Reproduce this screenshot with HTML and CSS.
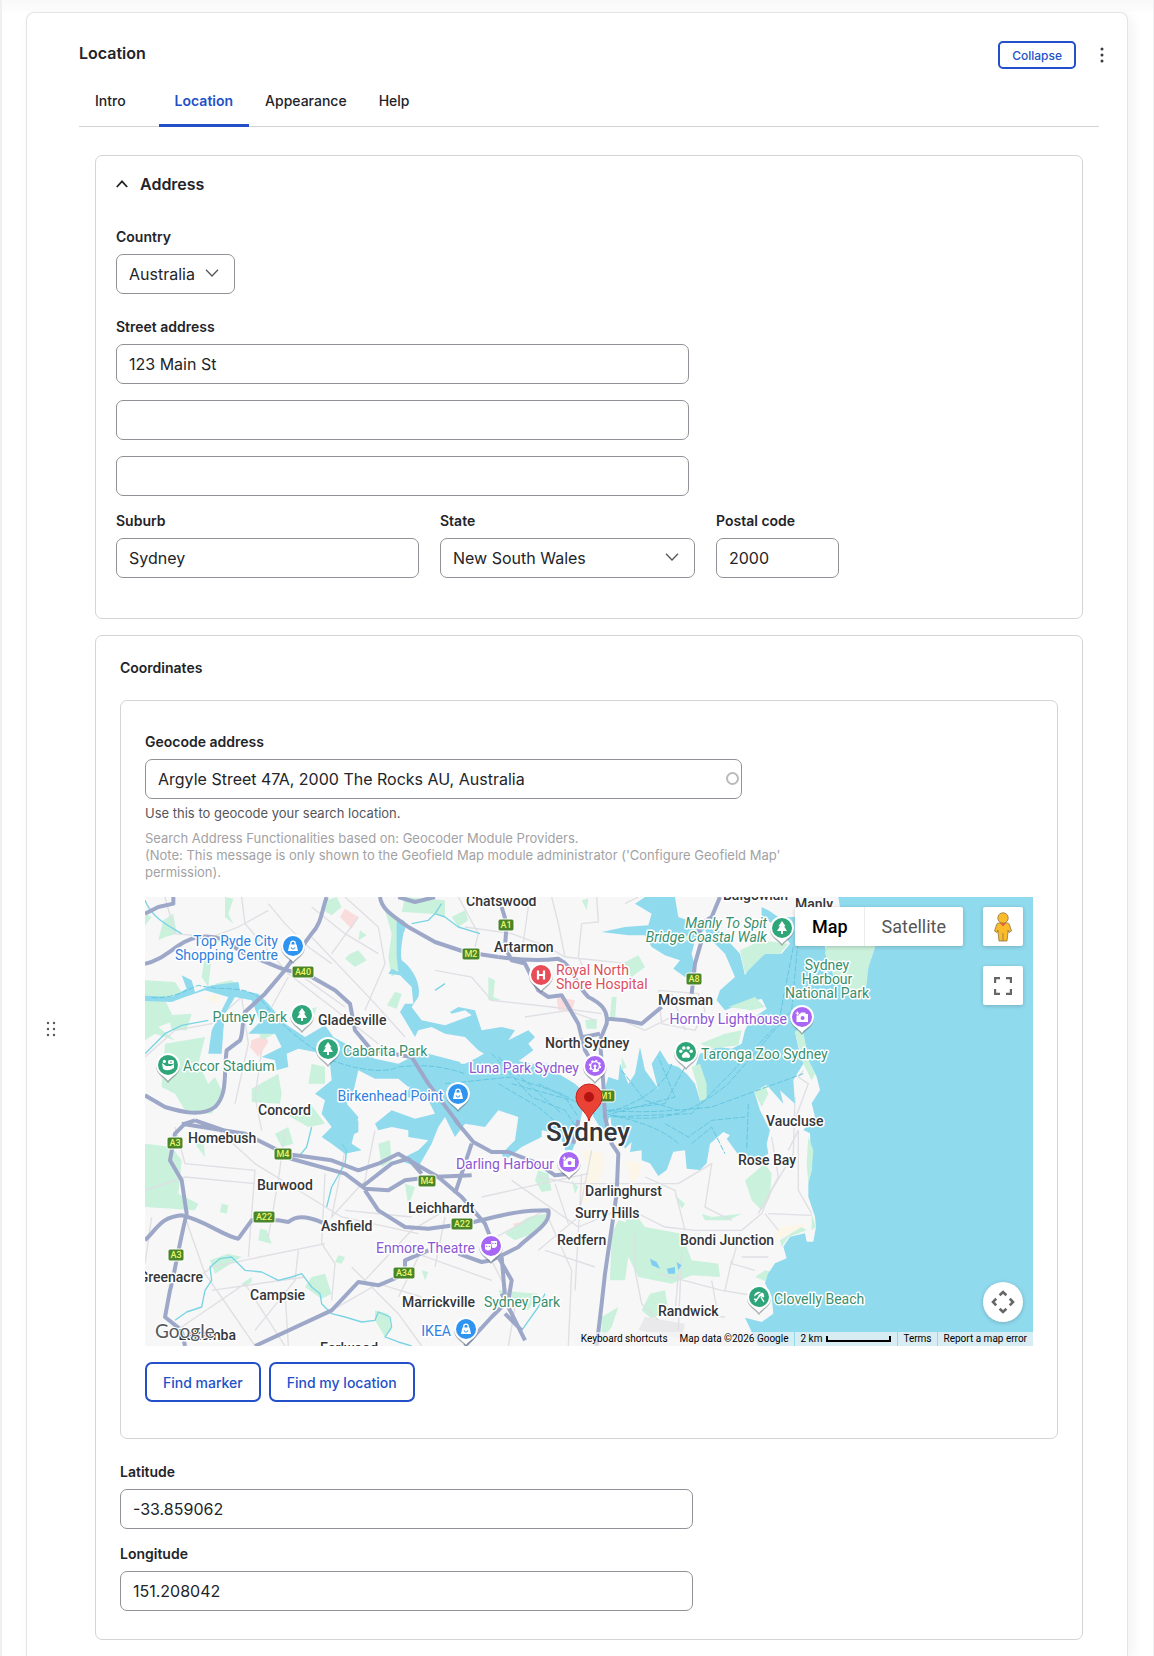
FILE: index.html
```html
<!DOCTYPE html>
<html lang="en">
<head>
<meta charset="utf-8">
<meta name="viewport" content="width=device-width, initial-scale=1">
<title>Location</title>
<link rel="stylesheet" href="styles.css">
</head>
<body>
<main class="page">
<article class="card">
  <div class="card-grip">
    <svg class="grip" viewBox="0 0 10 16" width="10" height="16" fill="#55565b" aria-hidden="true"><circle cx="2" cy="2" r="1.2"/><circle cx="8" cy="2" r="1.2"/><circle cx="2" cy="8" r="1.2"/><circle cx="8" cy="8" r="1.2"/><circle cx="2" cy="14" r="1.2"/><circle cx="8" cy="14" r="1.2"/></svg>
  </div>
  <div class="card-body">
    <header class="card-header">
      <h2 class="card-title">Location</h2>
      <div class="card-actions">
        <button type="button" class="btn btn-small">Collapse</button>
        <button type="button" class="kebab" aria-label="More actions"><svg viewBox="0 0 24 28" width="24" height="28" fill="#3a3b40" aria-hidden="true"><circle cx="12" cy="8" r="1.5"/><circle cx="12" cy="14" r="1.5"/><circle cx="12" cy="20" r="1.5"/></svg></button>
      </div>
    </header>
    <nav class="tabs">
      <a class="tab tab-first" href="#intro">Intro</a>
      <a class="tab tab-active" href="#location">Location</a>
      <a class="tab" href="#appearance">Appearance</a>
      <a class="tab" href="#help">Help</a>
    </nav>
    <div class="panel">
      <details class="box address" open>
        <summary class="summary"><svg viewBox="0 0 12 12" width="12" height="12" fill="none" stroke="#232429" stroke-width="1.8" aria-hidden="true"><path d="M.8 9 6 3.4 11.2 9"/></svg>Address</summary>
        <div class="address-fields">
          <div class="field">
            <label for="country">Country</label>
            <div class="select-wrap country"><select id="country"><option>Australia</option></select><svg class="caret" viewBox="0 0 14 8" width="14" height="8" aria-hidden="true"><path d="M1 .8 7 7 13 .8"/></svg></div>
          </div>
          <div class="field street">
            <label for="street1">Street address</label>
            <div class="stack">
              <input id="street1" type="text" value="123 Main St">
              <input type="text" aria-label="Street address line 2">
              <input type="text" aria-label="Street address line 3">
            </div>
          </div>
          <div class="field-row">
            <div class="field suburb"><label for="suburb">Suburb</label><input id="suburb" type="text" value="Sydney"></div>
            <div class="field state"><label for="state">State</label>
              <div class="select-wrap"><select id="state"><option>New South Wales</option></select><svg class="caret" viewBox="0 0 14 8" width="14" height="8" aria-hidden="true"><path d="M1 .8 7 7 13 .8"/></svg></div></div>
            <div class="field postal"><label for="postal">Postal code</label><input id="postal" type="text" value="2000"></div>
          </div>
        </div>
      </details>

      <section class="box coordinates">
        <h3 class="box-label">Coordinates</h3>
        <div class="box geocoder">
          <div class="field geocode">
            <label for="geocode">Geocode address</label>
            <div class="search-wrap"><input id="geocode" type="text" value="Argyle Street 47A, 2000 The Rocks AU, Australia"><span class="throbber"></span></div>
          </div>
          <p class="hint">Use this to geocode your search location.</p>
          <p class="hint note">Search Address Functionalities based on: Geocoder Module Providers.<br>(Note: This message is only shown to the Geofield Map module administrator ('Configure Geofield Map' permission).</p>

          <div class="map">
            <svg class="map-canvas" viewBox="0 0 888 449" preserveAspectRatio="xMidYMid slice" role="img" aria-label="Map of Sydney">
              <defs>
                <g id="pin"><path d="M0 17C-3 12-12 9-12 0A12 12 0 0 1 12 0C12 9 3 12 0 17Z" fill="#5b6770" opacity=".5" transform="translate(0 1)"/><path d="M0 16C-3 11-12 9-12 0A12 12 0 0 1 12 0C12 9 3 11 0 16Z" fill="#fff"/><circle r="10"/></g>
                <g id="tree" fill="#fff"><path d="M0-7-3.600-1.800H-2L-5 3H-1V6H1V3H5L2-1.800H3.600Z"/></g>
                <g id="bag" fill="none"><path d="M-3.600-1.500H3.600L5 5H-5Z" fill="#fff"/><path d="M-2.200-1V-2.600a2.200 2.200 0 0 1 4.400 0V-1" stroke="#fff" stroke-width="1.300"/><path d="M-1.800 1.300a1.800 1.800 0 0 0 3.600 0" stroke="#2f93f0" stroke-width="1"/></g>
                <g id="camera"><path d="M-5.500-3H-2L-1-4.500H3L4-3H6V5H-5.500Z" fill="#fff"/><circle cx=".6" cy="1" r="2" fill="#a866f5"/><path d="M-4.600-6V-1.600M-6.800-3.800H-2.400" stroke="#a866f5" stroke-width="2.200"/><path d="M-4.600-5.600V-2M-6.400-3.800H-2.800" stroke="#fff"/></g>
              </defs>
              <rect width="888" height="449" fill="#f7f7f8"/>
              <g transform="scale(.33333)">
                <!-- built-up and hospital areas -->
                <g fill="#fbf6e8"><path d="M1310 760 1370 765 1380 800 1350 880 1320 920 1300 890 1330 820ZM1440 790 1490 800 1480 840 1460 860ZM1900 990 1990 980 1940 1010 1890 1030ZM170 300 230 290 215 320Z"/></g>
                <g fill="#fbdcdc"><path d="M600 35 640 60 620 95 585 60ZM320 430 360 415 370 435 340 480 315 450ZM1105 980 1150 970 1160 1010 1110 1010ZM1235 300 1290 310 1280 345 1240 340Z"/></g>
                <path d="M1500 1260 1620 1280 1610 1325 1480 1300Z" fill="#e9e9ec"/>
                <!-- parks -->
                <g fill="#c9f1dc">
                  <path d="M55 70 85 50 95 110 60 120 40 130ZM240 0 265 5 250 50 265 80 240 60ZM545 10 575 0 590 30 560 55 535 40ZM645 100 665 115 640 130ZM615 170 640 160 665 190 630 210 600 185ZM750 285 770 290 755 335 725 325ZM0 50 20 60 0 85ZM780 0 900 10 900 60 860 50 770 45Z"/>
                  <path d="M720 40 750 60 770 110 755 160 765 220 740 240 730 180 740 110ZM0 250 90 255 120 300 60 310 90 370 40 390 90 430 30 410 0 430ZM60 440 180 420 160 500 190 560 210 540 235 590 200 650 120 640 90 590 50 570ZM70 355 140 350 125 400 80 400Z"/>
                  <path d="M320 575 400 530 410 590 405 620 320 615ZM210 260 260 250 280 270 230 280ZM340 400 380 380 410 400 350 430ZM440 370 480 340 515 330 500 380ZM420 650 500 625 540 680 490 690ZM180 175 200 180 190 270 170 240ZM500 500 540 510 540 560 490 560Z"/>
                  <path d="M0 740 80 750 110 790 100 890 160 920 150 940 0 930ZM230 920 250 925 245 950 225 945ZM390 710 430 690 445 740 410 750ZM180 780 150 740 175 720ZM345 995 365 1000 380 1040 340 1030ZM195 1090 250 1070 290 1080 210 1130ZM500 1140 540 1130 560 1190 530 1205 480 1170ZM290 1160 320 1140 320 1155 300 1170Z"/>
                  <path d="M690 1240 730 1250 740 1300 720 1320 690 1270ZM580 1075 600 1080 590 1100 570 1095ZM830 1120 850 1125 840 1150ZM780 860 810 870 790 930ZM700 740 735 730 740 790 710 810ZM1180 820 1210 830 1220 880 1190 885 1170 850ZM1150 960 1205 950 1190 1000 1110 1030 1080 1010ZM1060 1180 1180 1190 1150 1240 1080 1220Z"/>
                  <path d="M1400 1010 1420 970 1460 980 1470 950 1500 990 1610 1010 1640 1090 1720 1100 1725 1140 1640 1135 1580 1160 1480 1140 1450 1080 1440 1150 1395 1150ZM1515 1190 1560 1180 1570 1240 1520 1265 1490 1240ZM1370 1260 1420 1230 1400 1290 1370 1330ZM1440 960 1480 965 1475 1000 1450 1005ZM1590 895 1620 920 1610 935ZM1670 950 1700 960 1790 950 1750 970 1680 970Z"/>
                  <path d="M1800 850 1860 800 1880 830 1875 900 1850 940 1820 910ZM1860 1120 1900 1130 1880 1160 1830 1140ZM1280 850 1300 870 1290 890ZM920 60 960 40 970 70 940 90ZM1030 240 1050 250 1045 300 1070 310 1030 310ZM1400 300 1415 300 1410 370 1395 360ZM1430 200 1480 175 1500 210 1460 240ZM1320 370 1355 365 1355 395 1325 395ZM1310 10 1330 5 1325 40Z"/>
                </g>
                <!-- minor streets -->
                <g class="minor">
                  <path d="M60 0 90 110 200 120 280 90 370 40M290 0 300 80 430 230 560 330 700 440M370 20 420 80 490 150 560 200M500 120 690 320 780 420M430 240 380 330M600 0 700 90 720 200 660 340M460 230 600 330M640 60 560 170M500 30 600 110 700 170M0 480 90 400 200 380 290 300M290 300 310 440 270 620M350 460 330 600 350 700"/>
                  <path d="M90 690 120 800 330 820 310 1080M210 690 330 800 590 960 820 1010M420 700 400 850 370 1020M540 1040 200 1110 150 1150 0 1130M540 830 530 1040 570 1100 560 1210M120 960 180 1130 250 1230 330 1347M200 1180 480 1140M460 1060 450 1150 330 1300M20 960 0 1100M600 760 560 960 660 850 690 700M0 880 120 840 330 860M110 1290 300 1160 420 1347M420 1180 430 1347"/>
                  <path d="M650 1160 800 1000 900 940M560 1240 700 1160 830 1200M600 940 800 960M620 1110 760 1250 830 1347M760 1050 900 1100 1040 1150M830 1060 760 1200M900 960 870 1110M1010 900 1190 860 1330 830M1000 1050 1200 940 1280 1120 1270 1347M1100 850 1300 990 1420 940M1180 1060 1300 960 1340 760M1310 830 1290 1180M1040 1090 1110 1230 1090 1347M1200 1060 1350 1110M1230 860 1270 980M1180 840 1290 860 1600 860"/>
                  <path d="M1220 0 1240 80 1260 180M1310 80 1300 180 1330 240M1310 80 1360 75 1355 0M960 90 1100 110 1210 150 1260 180 1450 200M870 220 980 240 1040 310 1220 330 1370 350M940 0 1000 110 990 150M1150 30 1130 170M1140 360 1270 340 1350 370M1540 280 1660 290 1680 340 1650 400 1550 380 1540 280M1430 370 1500 400 1600 350M1580 290 1620 400M1200 420 1350 440M1480 0 1440 20"/>
                  <path d="M1440 930 1560 990 1650 1000 1790 1000 1850 950 1880 880 1945 770 1950 600M1870 950 2000 955M1900 1000 1860 950M1470 1010 1470 1120 1490 1220 1540 1270M1540 1130 1730 1180 1850 1200M1610 1060 1600 1300M1700 1150 1720 1260M1760 1090 1740 1180M1600 860 1700 800 1680 930 1760 970M1500 840 1590 880 1620 1000M1880 720 1900 840 1840 950M1790 1080 1870 1080M1600 1130 1590 1250 1740 1260M1960 700 1960 880 2000 950M1785 1010 1760 1100 1830 1120"/>
                </g>
                <!-- harbour and ocean -->
                <path fill="#90daee" d="M2664 0V1347H1840L1800 1262 1850 1275 1885 1250 1880 1199 1860 1159 1870 1129 1890 1099 1925 1084 1915 1049 1935 1019 1980 1009 1985 1034 2005 1034 2013 989 2010 959 1990 899 1990 859 2000 819 1997 769 1995 709 1975 699 2010 659 2000 619 2025 579 2015 539 1990 489 1975 409 1965 394 1950 405 1960 450 1975 500 1945 549 1950 620 1905 580 1915 620 1865 564 1828 584 1845 640 1875 700 1865 740 1870 770 1845 785 1825 805 1800 800 1770 760 1745 725 1755 715 1735 705 1695 740 1685 799 1665 819 1625 815 1620 760 1585 764 1565 819 1540 837 1515 799 1490 790 1490 760 1455 765 1460 735 1440 755 1425 710 1400 690 1395 650 1385 690 1370 700 1340 650 1315 630 1300 700 1290 740 1270 790 1255 740 1240 710 1190 700 1190 720 1130 750 1080 790 1070 770 1110 730 1120 660 1060 640 1020 690 960 680 930 720 900 660 880 690 860 740 820 810 760 790 820 760 850 730 790 720 790 700 740 690 700 700 690 680 740 640 810 665 870 650 850 610 780 600 800 560 760 540 800 530 870 540 870 490 900 500 960 500 1000 480 1035 459 1060 460 1090 480 1110 490 1160 500 1210 500 1240 530 1290 560 1330 600 1350 620 1375 590 1390 540 1420 550 1425 500 1450 560 1470 530 1485 450 1500 520 1530 560 1540 580 1520 500 1545 460 1570 500 1600 510 1625 530 1650 560 1665 610 1680 605 1678 560 1650 510 1665 470 1720 450 1760 455 1790 440 1800 400 1815 370 1865 335 1850 305 1790 320 1740 340 1715 310 1725 280 1770 240 1740 170 1710 140 1690 130 1680 95 1650 130 1640 170 1655 230 1620 240 1585 215 1605 190 1560 175 1520 150 1500 115 1450 115 1370 105 1440 90 1510 85 1520 50 1470 20 1500 0H1590L1600 60 1660 80 1720 100 1785 170 1800 235 1820 200 1860 170 1910 170 1935 140 1900 90 1850 60 1850 30 1870 40 1900 60 1950 60 2050 100 2040 150 2070 250 2110 285 2150 280 2170 210 2190 150 2140 120 2090 60 2080 0Z"/>
                <g fill="#90daee">
                  <path d="M110 235 140 250 150 285 200 265 280 255 285 280 340 290 370 320 420 380 480 420 540 385 565 420 620 450 690 485 760 500 830 465 945 495 960 530 870 545 790 570 760 545 690 545 640 520 625 585 605 620 640 660 620 740 650 760 600 770 560 740 530 720 560 690 530 650 540 610 510 590 560 550 555 500 510 465 460 455 425 470 430 510 395 520 390 490 350 480 410 450 390 410 310 410 345 375 320 310 270 300 240 350 235 400 230 470 190 470 200 400 250 300 180 280 120 300 80 315 0 312V296L80 300 125 275Z"/>
                  <path d="M755 70C780 60 790 80 775 110 770 140 765 170 770 190 800 210 830 260 820 300L800 330 830 370 900 385 980 355 960 340 920 350 915 345 940 330 990 340 1010 400 1070 390 1110 400 1090 430 1150 400 1170 420 1150 440 1165 460 1110 500 1050 490 1000 460 960 420 900 410 860 390 820 400 810 420 780 370 765 345 780 320 805 320 800 270 765 235 730 230 740 215 760 225 755 180Z"/>
                  <path d="M545 710 590 690 640 670 640 705 590 730 550 720Z"/>
                </g>
                <g fill="#c9f1dc">
                  <path d="M2050 110 2090 100 2190 150 2170 210 2165 265 2150 280 2110 285 2070 250 2040 170Z"/><path d="M1640 510 1665 500 1685 560 1685 605 1665 612 1655 560ZM1665 440 1740 410 1790 400 1780 445 1700 455ZM1950 405 1965 394 1975 409 1990 489 2010 530 2000 550 1975 500ZM1785 160 1850 130 1930 140 1905 170 1860 170 1800 230ZM1828 584 1860 565 1870 590 1850 630ZM1990 720 2005 760 2000 819 1990 859 1985 800ZM2000 950 2013 989 2000 1000ZM1430 480 1445 510 1430 520ZM1750 330 1830 300 1860 330 1820 340ZM1570 120 1600 110 1640 120 1620 135Z"/><path d="M1905 1030 1970 990 1985 1000 1930 1020 1910 1050Z"/>
                </g>
                <path d="M1515 1085 1535 1095 1545 1115 1520 1105ZM1565 1115 1590 1110 1590 1130 1570 1130ZM1595 1095 1610 1105 1600 1120Z" fill="#7fcdf2"/>
                <path d="M1945 680 1990 560 1960 540 1975 520M1960 700 1930 760" class="minor"/>
                <path fill="none" stroke="#7ad4e3" stroke-width="4" stroke-linejoin="round" d="M0 470 60 410 110 385 190 370M90 1270 125 1245 170 1230 180 1180 200 1150 195 1110 225 1085 260 1080 300 1120 350 1125 400 1150 440 1140 470 1130 500 1170 525 1190 530 1220 560 1250 600 1260 650 1275 690 1270 700 1245 735 1260 740 1290 720 1320 760 1335 800 1347M545 930 560 870 600 800 605 760 590 740M800 80 850 70 870 50 890 20M1130 1300 1180 1230 1200 1190M460 780 485 750 500 690M0 10C20 60 60 80 110 110M870 50 900 60 940 90 1005 110M870 280 900 260"/>
                <g class="ferry">
                  <path d="M1380 640C1500 650 1600 640 1700 630L1975 530M1380 650C1560 690 1650 640 1750 560L1940 340 1960 120M1380 660 1640 650 1900 380 1945 150M1040 470 1160 600 1260 640 1300 700M900 560 1100 540 1250 590 1350 650M1100 560 1280 610M1060 480 1250 650M1390 640 1560 620 1620 510M1400 650 1590 600 1540 480M1430 520 1500 610 1600 640M1560 680 1630 720 1700 670 1800 660M1810 620 1805 760M1640 740 1700 690 1740 770M1390 645C1480 620 1560 570 1580 500M1395 655C1480 670 1560 700 1600 740M1180 560 1260 600 1300 660M1060 560 1180 630 1250 690"/>
                  <path d="M20 302C90 305 120 280 160 265 240 285 300 260 350 310 420 400 480 440 560 490 640 520 720 530 760 510 840 500 900 510 960 530"/>
                </g>
                <!-- motorways -->
                <g class="road">
                  <path d="M545 0C530 40 530 80 500 110L415 225 360 290 300 345C290 380 295 410 285 430L245 460C235 530 250 590 210 630 170 660 110 645 60 630L0 595M0 50 40 30 85 20V0M0 200C60 190 100 130 160 120 240 110 260 150 300 170L410 215 500 240 570 280 615 320 630 400 680 460 800 480 850 560 940 680M705 0C710 40 750 60 790 90L870 135 960 165 1060 180M760 0 810 15 870 0"/>
                  <path d="M110 680 300 710 420 770 560 790 640 820 700 800 760 770 810 800 880 840M150 670 250 705M420 780 600 830 660 875 730 880 780 850 860 840 980 835M650 870 740 800 790 785 830 830M150 670 120 680 90 710 75 790 110 850 125 950C100 1050 85 1150 75 1180L60 1260 110 1300 120 1347M0 1030C40 990 50 960 110 955 180 970 240 1020 280 1025L320 970 400 970 430 975C460 950 500 960 550 985M660 880 700 940 780 990 850 995 960 980C1060 960 1100 940 1210 940 1220 980 1160 1010 1120 1050L1040 1090 1010 1095 940 1070"/>
                  <path d="M330 1347 560 1240 640 1155 700 1165 760 1140 780 1110 780 1090 850 1060M880 840 950 900 1020 980 1060 1080 1100 1150 1090 1210 1040 1260 960 1347M930 669 985 735 1040 765 1090 765 1180 800 1230 835 1280 830M980 740 950 830 930 890M1070 1190 1140 1330M1130 1300 1080 1250M1070 1080 1080 1200"/>
                  <path d="M1070 30 1085 80 1080 150 1100 190 1140 200 1180 280 1210 300 1250 295 1300 380 1320 460 1350 510M1060 180C1130 190 1200 190 1240 185 1290 210 1280 250 1330 300 1370 320 1390 340 1385 380L1365 430 1375 560 1380 660 1400 740 1420 770 1415 890 1380 1130 1370 1220 1355 1347M1390 365 1440 370 1490 380 1550 330M1315 420 1365 410M1640 290 1650 200 1670 130 1660 85 1700 60 1725 0M1300 669 1285 740"/>
                </g>
              </g>
              <!-- route shields -->
              <g class="shields">
                <g transform="translate(158 75)"><rect x="-11" y="-6" width="22" height="12" rx="2"/><text y="3">A40</text></g>
                <g transform="translate(361 28)"><rect x="-8" y="-6" width="16" height="12" rx="2"/><text y="3">A1</text></g>
                <g transform="translate(326 57)"><rect x="-9" y="-6" width="18" height="12" rx="2"/><text y="3">M2</text></g>
                <g transform="translate(549 82)"><rect x="-8" y="-6" width="16" height="12" rx="2"/><text y="3">A8</text></g>
                <g transform="translate(461 199)"><rect x="-9" y="-6" width="18" height="12" rx="2"/><text y="3">M1</text></g>
                <g transform="translate(30 246)"><rect x="-8" y="-6" width="16" height="12" rx="2"/><text y="3">A3</text></g>
                <g transform="translate(138 257)"><rect x="-9" y="-6" width="18" height="12" rx="2"/><text y="3">M4</text></g>
                <g transform="translate(282 284)"><rect x="-9" y="-6" width="18" height="12" rx="2"/><text y="3">M4</text></g>
                <g transform="translate(119 320)"><rect x="-11" y="-6" width="22" height="12" rx="2"/><text y="3">A22</text></g>
                <g transform="translate(317 327)"><rect x="-11" y="-6" width="22" height="12" rx="2"/><text y="3">A22</text></g>
                <g transform="translate(31 358)"><rect x="-8" y="-6" width="16" height="12" rx="2"/><text y="3">A3</text></g>
                <g transform="translate(259 376)"><rect x="-11" y="-6" width="22" height="12" rx="2"/><text y="3">A34</text></g>
              </g>
              <!-- places -->
              <g class="label town">
                <text x="321" y="9">Chatswood</text><text x="349" y="55">Artarmon</text><text x="578" y="3">Balgowlah</text><text x="650" y="12">Manly</text>
                <text x="513" y="108">Mosman</text><text x="173" y="128">Gladesville</text><text x="400" y="151">North Sydney</text><text x="113" y="218">Concord</text>
                <text x="621" y="229">Vaucluse</text><text x="43" y="246">Homebush</text><text x="593" y="268">Rose Bay</text><text x="112" y="293">Burwood</text>
                <text x="440" y="299">Darlinghurst</text><text x="263" y="316">Leichhardt</text><text x="430" y="321">Surry Hills</text><text x="176" y="334">Ashfield</text>
                <text x="412" y="348">Redfern</text><text x="535" y="348">Bondi Junction</text><text x="58" y="385" text-anchor="end">Greenacre</text><text x="105" y="403">Campsie</text>
                <text x="257" y="410">Marrickville</text><text x="513" y="419">Randwick</text><text x="91" y="443" text-anchor="end">Lakemba</text><text x="175" y="456">Earlwood</text>
                <text class="city" x="443" y="244" text-anchor="middle">Sydney</text>
              </g>
              <g class="label shop" text-anchor="end"><text x="133" y="49">Top Ryde City</text><text x="133" y="63">Shopping Centre</text><text x="298" y="204">Birkenhead Point</text><text x="306" y="439">IKEA</text></g>
              <g class="label park"><text x="142" y="125" text-anchor="end">Putney Park</text><text x="198" y="159">Cabarita Park</text><text x="38" y="174">Accor Stadium</text><text x="556" y="162">Taronga Zoo Sydney</text><text x="339" y="410">Sydney Park</text><text x="629" y="407">Clovelly Beach</text>
                <g text-anchor="middle"><text x="682" y="73">Sydney</text><text x="682" y="87">Harbour</text><text x="682" y="101">National Park</text></g>
                <g text-anchor="end" font-style="italic"><text x="622" y="31">Manly To Spit</text><text x="622" y="45">Bridge Coastal Walk</text></g></g>
              <g class="label sight" text-anchor="end"><text x="642" y="127">Hornby Lighthouse</text><text x="434" y="176">Luna Park Sydney</text><text x="409" y="272">Darling Harbour</text><text x="330" y="356">Enmore Theatre</text></g>
              <g class="label health"><text x="411" y="78">Royal North</text><text x="411" y="92">Shore Hospital</text></g>
              <!-- pins -->
              <g fill="#2f93f0"><g transform="translate(148 49)"><use href="#pin"/><use href="#bag"/></g><g transform="translate(313 197)"><use href="#pin"/><use href="#bag"/></g><g transform="translate(321 432)"><use href="#pin"/><use href="#bag"/></g></g>
              <g fill="#2fa57a"><g transform="translate(157 118)"><use href="#pin"/><use href="#tree"/></g><g transform="translate(183 152)"><use href="#pin"/><use href="#tree"/></g><g transform="translate(637 31)"><use href="#pin"/><use href="#tree"/></g>
                <g transform="translate(23 168)"><use href="#pin"/><path d="M-6-2-2 1H3L6-1V3Q0 7-5 4Z" fill="#fff"/><circle cx="-3.600" cy="-3.600" r="1.600" fill="#fff"/><rect x="0" y="-5" width="6" height="4" rx="1.500" fill="#fff"/><circle cx="3" cy="-3" r=".8"/></g>
                <g transform="translate(541 155)"><use href="#pin"/><g fill="#fff"><path d="M0-.5C2 .5 5 3 3.800 5.200 2.500 6.800 1.500 5.400 0 5.400S-2.500 6.800-3.800 5.200C-5 3-2 .5 0-.5Z"/><circle cx="-5.200" cy="-.8" r="1.700"/><circle cx="-2.200" cy="-4" r="1.800"/><circle cx="2.200" cy="-4" r="1.800"/><circle cx="5.200" cy="-.8" r="1.700"/></g></g>
                <g transform="translate(614 400)"><use href="#pin"/><path d="M-5-.5Q-4-6 2-5Z M5 .5Q6-3 3-4.400L-1-1.500Z" fill="#fff"/><path d="M-4 5 2-3M-5 2-2 3M2 0 5 5" stroke="#fff" stroke-width="1.400"/></g></g>
              <g fill="#a866f5"><g transform="translate(657 120)"><use href="#pin"/><use href="#camera"/></g><g transform="translate(424 265)"><use href="#pin"/><use href="#camera"/></g>
                <g transform="translate(450 169)"><use href="#pin"/><circle r="4.400" fill="none" stroke="#fff" stroke-width="1.400"/><circle r="5.400" fill="none" stroke="#fff" stroke-width="1.600" stroke-dasharray="2 2.200"/><path d="M-2.500 6 0 0 2.500 6Z" fill="#fff"/><circle r="1.500" fill="#fff"/></g>
                <g transform="translate(346 349)"><use href="#pin"/><g fill="#fff"><path d="M-6-2H0V3Q-3 6-6 3Z"/><path d="M0-5H6V0Q4 3 1 1.400Z"/></g><circle cx="-4.400" cy=".4" r=".7"/><circle cx="-1.600" cy=".4" r=".7"/><circle cx="2" cy="-2.600" r=".7"/><circle cx="4.400" cy="-2.600" r=".7"/></g></g>
              <g fill="#e84d57" transform="translate(396 78)"><use href="#pin"/><path d="M-3-4.500V4.500M3-4.500V4.500M-3 0H3" stroke="#fff" stroke-width="2.200"/></g>
              <path d="M444 224C442 214 431 211 431 200A13 13 0 0 1 457 200C457 211 446 214 444 224Z" fill="#ea4335" stroke="#c5221f"/><circle cx="444" cy="200" r="5" fill="#b31412"/>
              <text class="google" x="10" y="441">Google</text>
            </svg>
            <div class="map-types">
              <button type="button" class="map-type map-type-on">Map</button>
              <button type="button" class="map-type">Satellite</button>
            </div>
            <div class="map-tools">
              <button type="button" class="tool" aria-label="Street View"><svg viewBox="0 0 18 30" width="18" height="30" fill="#fbbc2c" stroke="#8f7440" stroke-width=".8" aria-hidden="true"><path d="M4.500 11H13.500Q15 11 15.500 13L17.500 19 15 20.500 14 18V20L13 29H5L4 20V18L3 20.500.5 19 2.500 13Q3 11 4.500 11Z"/><circle cx="9" cy="6" r="5.200"/><path d="M6 11H12L9 14.500Z" fill="#e2603b" stroke="none"/><path d="M9 21V29"/></svg></button>
              <button type="button" class="tool" aria-label="Toggle fullscreen view"><svg viewBox="0 0 18 18" width="18" height="18" fill="none" stroke="#666" stroke-width="2.200" aria-hidden="true"><path d="M1.100 6V1.100H6M12 1.100H16.900V6M16.900 12V16.900H12M6 16.900H1.100V12"/></svg></button>
            </div>
            <button type="button" class="tool camera" aria-label="Map camera controls"><svg viewBox="0 0 24 24" width="24" height="24" fill="none" stroke="#666" stroke-width="2.600" aria-hidden="true"><path d="M8.600 5.200 12 2 15.400 5.200M8.600 18.800 12 22 15.400 18.800M5.200 8.600 2 12 5.200 15.400M18.800 8.600 22 12 18.800 15.400"/></svg></button>
            <div class="map-legal">
              <button type="button" class="legal">Keyboard shortcuts</button>
              <span class="legal">Map data ©2026 Google</span>
              <button type="button" class="legal legal-line legal-scale">2 km<span class="scale"></span></button>
              <a class="legal legal-line legal-terms" href="#terms">Terms</a>
              <a class="legal legal-line" href="#report">Report a map error</a>
            </div>
          </div>

          <div class="map-buttons">
            <button type="button" class="btn">Find marker</button>
            <button type="button" class="btn">Find my location</button>
          </div>
        </div>
        <div class="latlng">
          <div class="field"><label for="lat">Latitude</label><input id="lat" type="text" value="-33.859062"></div>
          <div class="field"><label for="lng">Longitude</label><input id="lng" type="text" value="151.208042"></div>
        </div>
      </section>
    </div>
  </div>
</article>
</main>
</body>
</html>
```
FILE: styles.css
```css
* { box-sizing: border-box; }

:root {
  --ink: #232429;
  --blue: #2350c8;
  --line: #d4d4d8;
  --field-line: #919297;
}

body {
  margin: 0;
  background: #fff;
  color: var(--ink);
  font-family: Inter, "Liberation Sans", sans-serif;
  font-size: 16px;
}

button, input, select { font: inherit; color: inherit; }
h2, h3, p { margin: 0; }

.page {
  min-height: 100vh;
  display: flex;
  padding: 12px 25px 0 24px;
  border: solid #f0f0f2;
  border-width: 0 1px 0 2px;
  background: linear-gradient(#f9f9fa, #fdfdfd 12px, #fff 12px);
}

.card {
  flex: 1;
  min-width: 0;
  display: flex;
  background: #fff;
  border: 1px solid #e3e4e7;
  border-bottom: 0;
  border-radius: 8px 8px 0 0;
  box-shadow: 4px 4px 12px rgba(30, 40, 70, .06);
}

.card-grip {
  flex: none;
  width: 48px;
  display: flex;
  align-items: center;
  justify-content: center;
  padding-top: 389px;
}

.card-body {
  flex: 1;
  min-width: 0;
  padding: 28px 0 16px 4px;
}

.card-header {
  display: flex;
  justify-content: space-between;
  align-items: flex-start;
  padding-right: 13px;
}
.card-title { font-size: 16px; line-height: 24px; font-weight: 600; }
.card-actions { display: flex; gap: 14px; }
.kebab { border: 0; padding: 0; background: none; width: 24px; height: 28px; }
.kebab svg { display: block; }

.btn {
  height: 40px;
  padding: 0 16px;
  border: 2px solid var(--blue);
  border-radius: 7px;
  background: #fff;
  color: var(--blue);
  font-size: 14px;
  font-weight: 500;
}
.btn-small { height: 28px; padding: 0 12px; border-radius: 5px; font-size: 12px; }

.tabs {
  display: flex;
  margin-right: 28px;
  box-shadow: inset 0 -1px var(--line);
}
.tab {
  padding: 22px 16px 13px;
  border-bottom: 3px solid transparent;
  color: var(--ink);
  font-size: 14px;
  line-height: 20px;
  font-weight: 500;
  text-decoration: none;
}
.tab-first { margin-right: 17px; }
.tab-active { color: var(--blue); border-color: var(--blue); font-weight: 600; }

.panel {
  display: flex;
  flex-direction: column;
  gap: 16px;
  padding: 28px 44px 0 16px;
}
.box { border: 1px solid var(--line); border-radius: 7px; }

.address { padding: 16px 20px 40px; }
.summary {
  display: flex;
  align-items: center;
  gap: 12px;
  list-style: none;
  line-height: 24px;
  font-weight: 600;
}
.address-fields { display: flex; flex-direction: column; padding-top: 32px; }

.field { display: flex; flex-direction: column; gap: 8px; }
label, .box-label { font-size: 14px; line-height: 18px; font-weight: 600; }
input, select {
  display: block;
  width: 100%;
  height: 40px;
  padding: 0 12px;
  border: 1px solid var(--field-line);
  border-radius: 7px;
  background: #fff;
  appearance: none;
}
.select-wrap { position: relative; }
.country { align-self: flex-start; width: 119px; }
.caret {
  position: absolute;
  right: 16px;
  top: 15px;
  fill: none;
  stroke: #55565b;
  stroke-width: 1.3;
  pointer-events: none;
}
.street { margin-top: 24px; max-width: 573px; }
.stack { display: flex; flex-direction: column; gap: 16px; }
.field-row { display: flex; gap: 21px; margin-top: 16px; }
.suburb { flex: 0 1 303px; }
.state { flex: 0 1 255px; }
.postal { flex: 0 1 123px; }

.coordinates { padding: 23px 24px 28px; }
.geocoder { margin-top: 23px; padding: 32px 24px 36px; }
.geocode { max-width: 597px; }
.search-wrap { position: relative; }
.throbber {
  position: absolute;
  right: 3px;
  top: 13px;
  width: 13px;
  height: 13px;
  border: 2px solid #b9babd;
  border-radius: 50%;
}
.hint { margin-top: 6px; font-size: 13px; line-height: 17px; color: #55565b; }
.note { margin-top: 8px; max-width: 640px; color: #a2a2a4; }

.map {
  position: relative;
  height: 449px;
  margin: 16px 0;
  overflow: hidden;
  background: #90daee;
  font-family: Roboto, "Liberation Sans", sans-serif;
}
.map-canvas { display: block; width: 100%; height: 100%; }
.minor { fill: none; stroke: #dfdfe4; stroke-width: 4; }
.road { fill: none; stroke: #9da8c9; stroke-width: 12; stroke-linejoin: round; }
.ferry { fill: none; stroke: #64c6df; stroke-width: 3; stroke-dasharray: 18 5; }

.label { font-size: 14px; stroke: #fff; stroke-width: 3px; stroke-linejoin: round; paint-order: stroke; }
.town { fill: #33363a; font-weight: 500; }
.city { font-size: 26px; }
.shop { fill: #2f80dd; }
.park { fill: #378f6e; }
.sight { fill: #8b57d3; }
.health { fill: #dc4f60; }
.shields rect { fill: #4a8529; stroke: #fff; }
.shields text { fill: #e8f56a; font-size: 9px; font-weight: 500; text-anchor: middle; }
.google {
  fill: #55585c;
  stroke: #fff;
  stroke-width: 2px;
  paint-order: stroke;
  font-family: Lato, sans-serif;
  font-size: 19px;
}

.map-types {
  position: absolute;
  top: 10px;
  right: 70px;
  display: flex;
  background: #fff;
  border-radius: 2px;
  box-shadow: 0 1px 4px rgba(0, 0, 0, .2);
}
.map-type {
  height: 39px;
  padding: 0 17px;
  border: 0;
  background: none;
  color: #565656;
  font-size: 18px;
}
.map-type-on { padding-right: 16px; color: #000; font-weight: 500; border-right: 1px solid #ececec; }

.map-tools {
  position: absolute;
  top: 10px;
  right: 10px;
  display: flex;
  flex-direction: column;
  gap: 20px;
}
.tool {
  display: flex;
  align-items: center;
  justify-content: center;
  width: 40px;
  height: 39px;
  padding: 0;
  border: 0;
  border-radius: 2px;
  background: #fff;
  box-shadow: 0 1px 4px rgba(0, 0, 0, .2);
}
.camera { position: absolute; right: 10px; bottom: 24px; height: 40px; border-radius: 50%; }

.map-legal {
  position: absolute;
  right: 0;
  bottom: 0;
  display: flex;
  background: rgba(245, 245, 245, .7);
}
.legal {
  display: flex;
  align-items: center;
  height: 14px;
  padding: 0 6px;
  border: 0;
  background: none;
  color: #000;
  font-size: 10px;
  line-height: 14px;
  text-decoration: none;
  white-space: nowrap;
}
.legal-line { border-left: 1px solid #90daee; }
.legal-scale { gap: 4px; padding: 0 6px 0 5px; }
.legal-terms { padding: 0 5px; }
.scale { width: 65px; height: 6px; border: 2px solid #000; border-top: 0; }

.map-buttons { display: flex; gap: 8px; }
.latlng {
  display: flex;
  flex-direction: column;
  gap: 16px;
  max-width: 573px;
  padding-top: 24px;
}
```
